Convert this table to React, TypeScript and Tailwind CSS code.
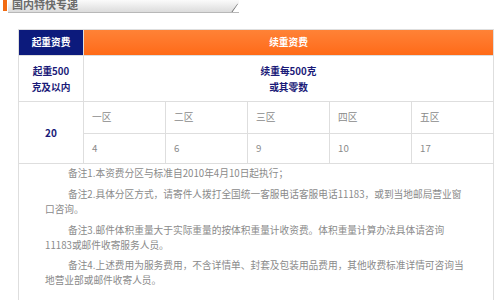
import React from "react";

const font = { fontFamily: '"Noto Sans CJK SC", "Noto Sans", sans-serif' };

export default function App() {
  const zones = ["一区", "二区", "三区", "四区", "五区"];
  const prices = ["4", "6", "9", "10", "17"];
  return (
    <div className="w-[500px] h-[300px] bg-white overflow-hidden relative" style={font}>
      {/* title bar */}
      <div className="flex items-start h-[14px]">
        <div className="ml-[3px] mt-0 w-[4px] h-[11px] bg-[#f26a10]" />
        <div className="relative ml-[1px] w-[231px] h-[13px] overflow-hidden bg-gradient-to-b from-[#fbfbfb] to-[#dcdcdc] border-b border-[#b8b8b8]">
          <div className="-mt-[2px] pl-[4px] text-[11px] leading-[13px] font-bold text-[#6b6b6b]">国内特快专递</div>
          <svg className="absolute right-0 top-0" width="10" height="13" viewBox="0 0 10 13">
            <path d="M9 4 L3 12" stroke="#7a7a7a" strokeWidth="1.2" fill="none" />
            <path d="M9 4 L10 4 L10 13 L3 13 Z" fill="#ffffff" />
          </svg>
        </div>
      </div>

      {/* table */}
      <div className="ml-[18px] mt-[15px] w-[476px] bg-[#dedede] p-px grid grid-cols-[64px_repeat(5,1fr)] gap-px text-[9.7px]">
        <div className="h-[25px] bg-[#0c1a7c] flex items-center justify-center text-white font-bold">起重资费</div>
        <div className="col-span-5 h-[25px] bg-gradient-to-b from-[#ff8236] to-[#ff6a16] flex items-center justify-center text-white font-bold">续重资费</div>

        <div className="h-[45px] bg-white flex items-center justify-center text-center font-bold text-[#1a1a78] leading-[16px]">
          起重500
          <br />
          克及以内
        </div>
        <div className="col-span-5 h-[45px] bg-white flex items-center justify-center text-center font-bold text-[#1a1a78] leading-[16px]">
          续重每500克
          <br />
          或其零数
        </div>

        <div className="row-span-2 bg-white flex items-center justify-center font-bold text-[10px] text-[#1a1a78]">20</div>
        {zones.map((z) => (
          <div key={z} className="h-[31px] bg-white flex items-center pl-[8px] text-[#8a8a8a]">
            {z}
          </div>
        ))}
        {prices.map((p, i) => (
          <div key={i} className="h-[29px] bg-white flex items-center pl-[8px] text-[#8a8a8a]">
            {p}
          </div>
        ))}

        <div className="col-span-6 bg-white pl-[26px] pr-[10px] pt-[2px] pb-[12px] text-[#8a8a8a] leading-[15.5px] whitespace-nowrap">
          <p className="indent-[23px]">备注1.本资费分区与标准自2010年4月10日起执行；</p>
          <p className="indent-[23px] mt-[5px]">
            备注2.具体分区方式，请寄件人拨打全国统一客服电话客服电话11183，或到当地邮局营业窗
            <br />
            口咨询。
          </p>
          <p className="indent-[23px] mt-[5px]">
            备注3.邮件体积重量大于实际重量的按体积重量计收资费。体积重量计算办法具体请咨询
            <br />
            11183或邮件收寄服务人员。
          </p>
          <p className="indent-[23px] mt-[4px]">
            备注4.上述费用为服务费用，不含详情单、封套及包装用品费用，其他收费标准详情可咨询当
            <br />
            地营业部或邮件收寄人员。
          </p>
        </div>
      </div>
    </div>
  );
}
